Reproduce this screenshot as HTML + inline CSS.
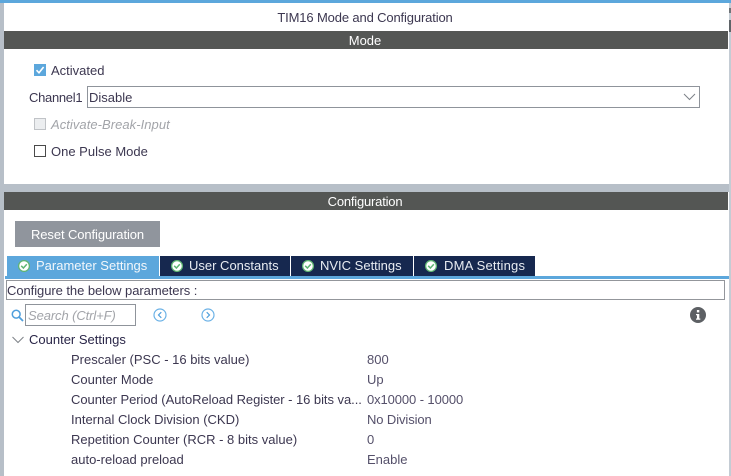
<!DOCTYPE html>
<html>
<head>
<meta charset="utf-8">
<style>
html,body{margin:0;padding:0;background:#fff}
body{position:relative;width:731px;height:476px;overflow:hidden;font-family:"Liberation Sans",sans-serif;font-size:13px;color:#3c3750}
.a{position:absolute;box-sizing:border-box}
.t{position:absolute;white-space:nowrap;line-height:18px;height:18px}
.bar{position:absolute;left:4px;width:724px;height:18px;background:#545654;color:#fff;text-align:center;line-height:19px;padding-right:2px;box-sizing:border-box}
.tab{position:absolute;top:256px;height:20px;background:#16284f;color:#e8ecf2;line-height:20px;white-space:nowrap}
.tab svg{position:absolute;left:11px;top:4px}
.tab span{position:absolute;top:0}
</style>
</head>
<body>
<div class="a" style="left:0;top:0;width:731px;height:3px;background:#5ca7dc"></div>
<div class="a" style="left:0;top:3px;width:4px;height:473px;background:#b7bfc8"></div>
<div class="a" style="left:729px;top:3px;width:2px;height:473px;background:#c4ccd4"></div>
<div class="a" style="left:729px;top:8px;width:2px;height:5px;background:#6f7478"></div>
<div class="a" style="left:729px;top:20px;width:2px;height:12px;background:#5f6468"></div>
<div class="a" style="left:4px;top:184px;width:725px;height:8px;background:#b7bfc8"></div>

<div class="t" style="left:4px;width:722px;top:9px;text-align:center;letter-spacing:-.14px">TIM16 Mode and Configuration</div>
<div class="bar" style="top:31px">Mode</div>

<div class="a" style="left:34px;top:64px;width:12px;height:12px;background:#5ca7dc"></div>
<svg class="a" style="left:34px;top:64px" width="12" height="12"><path d="M2.5 6.2L5 8.8L9.6 3" fill="none" stroke="#fff" stroke-width="1.6"/></svg>
<div class="t" style="left:51px;top:62px">Activated</div>

<div class="t" style="left:29px;top:89px;letter-spacing:-.3px">Channel1</div>
<div class="a" style="left:87px;top:86px;width:613px;height:22px;border:1px solid #8f949b;background:#fff"></div>
<div class="t" style="left:89px;top:89px">Disable</div>
<svg class="a" style="left:683px;top:93px" width="13" height="8"><path d="M1 1L6.5 6.5L12 1" fill="none" stroke="#7d8288" stroke-width="1"/></svg>

<div class="a" style="left:34px;top:118px;width:12px;height:12px;background:#eceef0;border:1px solid #c0c3c7"></div>
<div class="t" style="left:51px;top:116px;font-style:italic;color:#a2a4a9;letter-spacing:.05px">Activate-Break-Input</div>
<div class="a" style="left:34px;top:145px;width:12px;height:12px;background:#fff;border:1px solid #4a4a4a"></div>
<div class="t" style="left:51px;top:143px">One Pulse Mode</div>

<div class="bar" style="top:192px;letter-spacing:-.2px">Configuration</div>

<div class="a" style="left:15px;top:221px;width:145px;height:26px;background:#90959d;color:#fff;line-height:27px;text-align:center;letter-spacing:-.1px">Reset Configuration</div>

<div class="tab" style="left:7px;width:152px;background:#5ca7dc;color:#f2f7fb"><svg width="12" height="12"><circle cx="6" cy="6" r="5.4" fill="#fff" stroke="#5fb573" stroke-width="1.3"/><path d="M3.2 5.8L5.4 8L8.8 4.2" fill="none" stroke="#5fb573" stroke-width="1.5"/></svg><span style="left:29px">Parameter Settings</span></div>
<div class="tab" style="left:160px;width:130px"><svg width="12" height="12"><circle cx="6" cy="6" r="5.4" fill="#fff" stroke="#5fb573" stroke-width="1.3"/><path d="M3.2 5.8L5.4 8L8.8 4.2" fill="none" stroke="#5fb573" stroke-width="1.5"/></svg><span style="left:29px">User Constants</span></div>
<div class="tab" style="left:291px;width:122px"><svg width="12" height="12"><circle cx="6" cy="6" r="5.4" fill="#fff" stroke="#5fb573" stroke-width="1.3"/><path d="M3.2 5.8L5.4 8L8.8 4.2" fill="none" stroke="#5fb573" stroke-width="1.5"/></svg><span style="left:29px">NVIC Settings</span></div>
<div class="tab" style="left:414px;width:121px"><svg width="12" height="12"><circle cx="6" cy="6" r="5.4" fill="#fff" stroke="#5fb573" stroke-width="1.3"/><path d="M3.2 5.8L5.4 8L8.8 4.2" fill="none" stroke="#5fb573" stroke-width="1.5"/></svg><span style="left:30px;letter-spacing:.2px">DMA Settings</span></div>
<div class="a" style="left:5px;top:276px;width:724px;height:3px;background:#5ca7dc"></div>

<div class="a" style="left:6px;top:280px;width:719px;height:20px;border:1px solid #93969b;background:#fff"></div>
<div class="t" style="left:7px;top:282px;letter-spacing:-.06px">Configure the below parameters :</div>

<svg class="a" style="left:11px;top:309px" width="13" height="13"><circle cx="5.2" cy="5.2" r="3.9" fill="none" stroke="#4f9fdc" stroke-width="1.5"/><path d="M8 8L12 12" stroke="#4f9fdc" stroke-width="1.8"/></svg>
<div class="a" style="left:25px;top:304px;width:111px;height:22px;border:1px solid #8f949b;background:#fff"></div>
<div class="t" style="left:28px;top:307px;font-style:italic;color:#a2a4a9;letter-spacing:-.1px">Search (Ctrl+F)</div>
<svg class="a" style="left:153px;top:308px" width="14" height="14"><circle cx="7" cy="7" r="6" fill="none" stroke="#6cb2e6" stroke-width="1.2"/><path d="M8.3 4.2L5.5 7L8.3 9.8" fill="none" stroke="#4f9fdc" stroke-width="1.2"/></svg>
<svg class="a" style="left:201px;top:308px" width="14" height="14"><circle cx="7" cy="7" r="6" fill="none" stroke="#6cb2e6" stroke-width="1.2"/><path d="M5.7 4.2L8.5 7L5.7 9.8" fill="none" stroke="#4f9fdc" stroke-width="1.2"/></svg>
<svg class="a" style="left:690px;top:307px" width="16" height="16"><circle cx="8" cy="8" r="8" fill="#5d6064"/><rect x="6.9" y="3" width="2.4" height="2.4" fill="#fff"/><path d="M6 7H9.3V11.5H10.3V12.8H6V11.5H7V8.3H6Z" fill="#fff"/></svg>

<svg class="a" style="left:12px;top:336px" width="12" height="8"><path d="M.5 1L6 6.5L11.5 1" fill="none" stroke="#7d8288" stroke-width="1"/></svg>
<div class="t" style="left:29px;top:331px;color:#2a2648">Counter Settings</div>

<div class="t" style="left:71px;top:351px">Prescaler (PSC - 16 bits value)</div>
<div class="t" style="left:71px;top:371px">Counter Mode</div>
<div class="t" style="left:71px;top:391px;letter-spacing:-.05px">Counter Period (AutoReload Register - 16 bits va...</div>
<div class="t" style="left:71px;top:411px">Internal Clock Division (CKD)</div>
<div class="t" style="left:71px;top:431px">Repetition Counter (RCR - 8 bits value)</div>
<div class="t" style="left:71px;top:451px">auto-reload preload</div>

<div class="t" style="left:367px;top:351px;color:#55506a">800</div>
<div class="t" style="left:367px;top:371px;color:#55506a">Up</div>
<div class="t" style="left:367px;top:391px;color:#55506a;letter-spacing:-.1px">0x10000 - 10000</div>
<div class="t" style="left:367px;top:411px;color:#55506a;letter-spacing:-.1px">No Division</div>
<div class="t" style="left:367px;top:431px;color:#55506a">0</div>
<div class="t" style="left:367px;top:451px;color:#55506a">Enable</div>
</body>
</html>
